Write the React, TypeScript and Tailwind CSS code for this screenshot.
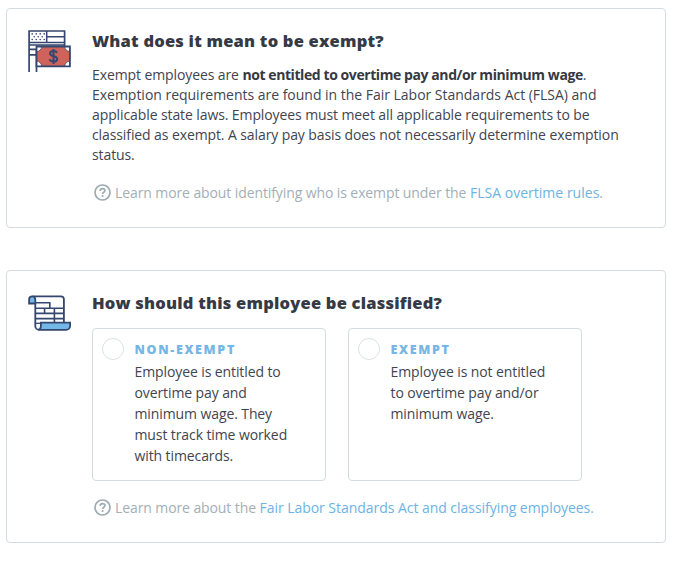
import type { ReactNode } from "react";

function FlagMoneyIcon() {
  return (
    <svg width="44" height="44" viewBox="0 0 44 44" fill="none">
      <path d="M1.100 43V2h35.500v15M8.500 43V19.700M1.100 20.300h7.400M1.100 25.800h7.400" stroke="#34476f" strokeWidth="1.700" />
      <path d="M18.700 2v11.600M18.700 7.800h17.900M1.100 13.600h35.500M1.100 15.900h35.500" stroke="#34476f" strokeWidth="1.500" />
      <g fill="#34476f">
        {[4.2, 8.2, 12.2, 16.2].map((x) => (
          <g key={x}>
            <circle cx={x} cy="4.900" r="0.800" />
            <circle cx={x} cy="10.500" r="0.800" />
          </g>
        ))}
        {[6.2, 10.2, 14.2].map((x) => (
          <circle key={x} cx={x} cy="7.700" r="0.800" />
        ))}
      </g>
      <path d="M8.500 17.500h33.400v19.800H8.500z" fill="#fff" />
      <path
        d="M13.600 17.500h23.200a5.100 5.100 0 0 0 5.100 5.100v9.600a5.100 5.100 0 0 0-5.100 5.100H13.600a5.100 5.100 0 0 0-5.100-5.100v-9.600a5.100 5.100 0 0 0 5.100-5.100z"
        fill="#cf635b"
        stroke="#34476f"
        strokeWidth="0.700"
      />
      <path d="M8.500 17.500h33.400v19.800H8.500z" stroke="#34476f" strokeWidth="1.800" />
      <path
        d="M29 23.900c-.5-1.200-1.700-1.800-3.500-1.800-2.100 0-3.500.9-3.500 2.500 0 3.700 7.200 1.700 7.200 5.300 0 1.600-1.500 2.600-3.700 2.600-2.100 0-3.500-.8-3.900-2.300M25.500 19.900v15"
        stroke="#34476f"
        strokeWidth="2"
      />
    </svg>
  );
}

function ScrollIcon() {
  return (
    <svg width="44" height="37" viewBox="0 0 44 37" fill="none" stroke="#34476f" strokeWidth="1.800">
      <path d="M4.500 1.300h28.400a3 3 0 0 1 3 3v23M7.300 8.500V31a3.800 3.800 0 0 0 3.800 3.800" />
      <path d="M1.100 8.500V4.400a3.100 3.100 0 0 1 6.200 0v4.100z" fill="#73b7e6" />
      <path
        d="M7.300 7.700h14.500v5.600M7.300 13.300h28.600M7.300 18.400h28.600M7.300 23.600h28.600M16.600 13.300v5.100M26.400 13.300v13.700"
        strokeWidth="1.600"
      />
      <path d="M12.900 27.700h29.200v3.200a3.900 3.900 0 0 1-3.900 3.900H10.500c1.600-.5 2.400-1.900 2.400-4z" fill="#73b7e6" />
      <path d="M7.300 28.300h5.600" strokeWidth="1.300" />
    </svg>
  );
}

function HelpIcon() {
  return (
    <svg className="shrink-0" width="17" height="17" viewBox="0 0 17 17" fill="none" stroke="#9eabb2">
      <circle cx="8.500" cy="8.500" r="7.500" strokeWidth="1.700" />
      <path d="M6.100 6.900c.1-1.500 1-2.300 2.400-2.300s2.400.8 2.400 2c0 1.700-2.300 1.700-2.300 3.500" strokeWidth="1.700" />
      <circle cx="8.600" cy="12" r="1.050" fill="#9eabb2" stroke="none" />
    </svg>
  );
}

function LearnMore({ className, children }: { className: string; children: ReactNode }) {
  return (
    <p className={`flex h-5 items-center gap-1 pl-0.5 text-[14px] tracking-[-0.1px] text-[#a3afb5] ${className}`}>
      <HelpIcon />
      <span>{children}</span>
    </p>
  );
}

function Title({ children }: { children: ReactNode }) {
  return (
    <h2 className="h-6 text-[16.5px] leading-[23px] font-extrabold tracking-[0.21px] text-[#353a44]">{children}</h2>
  );
}

function Option({ label, children }: { label: string; children: ReactNode }) {
  return (
    <label className="flex h-[153px] w-[234px] gap-[10.5px] rounded border border-[#d5dce1] pt-[9px] pl-[9px]">
      <span className="size-[22px] shrink-0 rounded-full border-[1.5px] border-[#dde1e4]" />
      <span className="block">
        <span className="block h-[23px] text-[12.5px] leading-[23px] font-extrabold tracking-[1.65px] text-[#75b6e4]">
          {label}
        </span>
        <span className="block text-[14px] leading-[21.1px] tracking-[-0.1px]">{children}</span>
      </span>
    </label>
  );
}

export default function App() {
  return (
    <main className="h-[566px] w-[698px] bg-white pt-2 pl-1.5 font-['Open_Sans',sans-serif] whitespace-nowrap text-[#41454f]">
      <section className="flex h-[220px] w-[660px] rounded border border-[#d5dce1] pt-5 pl-[21px]">
        <div className="w-[64px] shrink-0">
          <FlagMoneyIcon />
        </div>
        <div>
          <Title>What does it mean to be exempt?</Title>
          <p className="mt-3 text-[14px] leading-5 tracking-[-0.1px]">
            Exempt employees are{" "}
            <strong className="tracking-[-0.42px] text-[#353943]">not entitled to overtime pay and/or minimum wage</strong>.
            <br />
            <span className="tracking-[-0.02px]">
              Exemption requirements are found in the Fair Labor Standards Act (FLSA) and
            </span>
            <br />
            applicable state laws. Employees must meet all applicable requirements to be
            <br />
            classified as exempt. A salary pay basis does not necessarily determine exemption
            <br />
            status.
          </p>
          <LearnMore className="mt-[17px]">
            Learn more about identifying who is exempt under the{" "}
            <a className="tracking-[0.02px] text-[#6db3e4]">FLSA overtime rules</a>.
          </LearnMore>
        </div>
      </section>

      <section className="mt-[42px] flex h-[273px] w-[660px] rounded border border-[#d5dce1] pt-5 pl-[21px]">
        <div className="w-[64px] shrink-0 pt-1">
          <ScrollIcon />
        </div>
        <div>
          <Title>How should this employee be classified?</Title>
          <div className="mt-[13px] flex gap-[22px]">
            <Option label="NON-EXEMPT">
              Employee is entitled to
              <br />
              overtime pay and
              <br />
              minimum wage. They
              <br />
              must track time worked
              <br />
              with timecards.
            </Option>
            <Option label="EXEMPT">
              Employee is not entitled
              <br />
              to overtime pay and/or
              <br />
              minimum wage.
            </Option>
          </div>
          <LearnMore className="mt-4">
            Learn more about the{" "}
            <a className="tracking-[-0.04px] text-[#6db3e4]">Fair Labor Standards Act and classifying employees</a>.
          </LearnMore>
        </div>
      </section>
    </main>
  );
}
